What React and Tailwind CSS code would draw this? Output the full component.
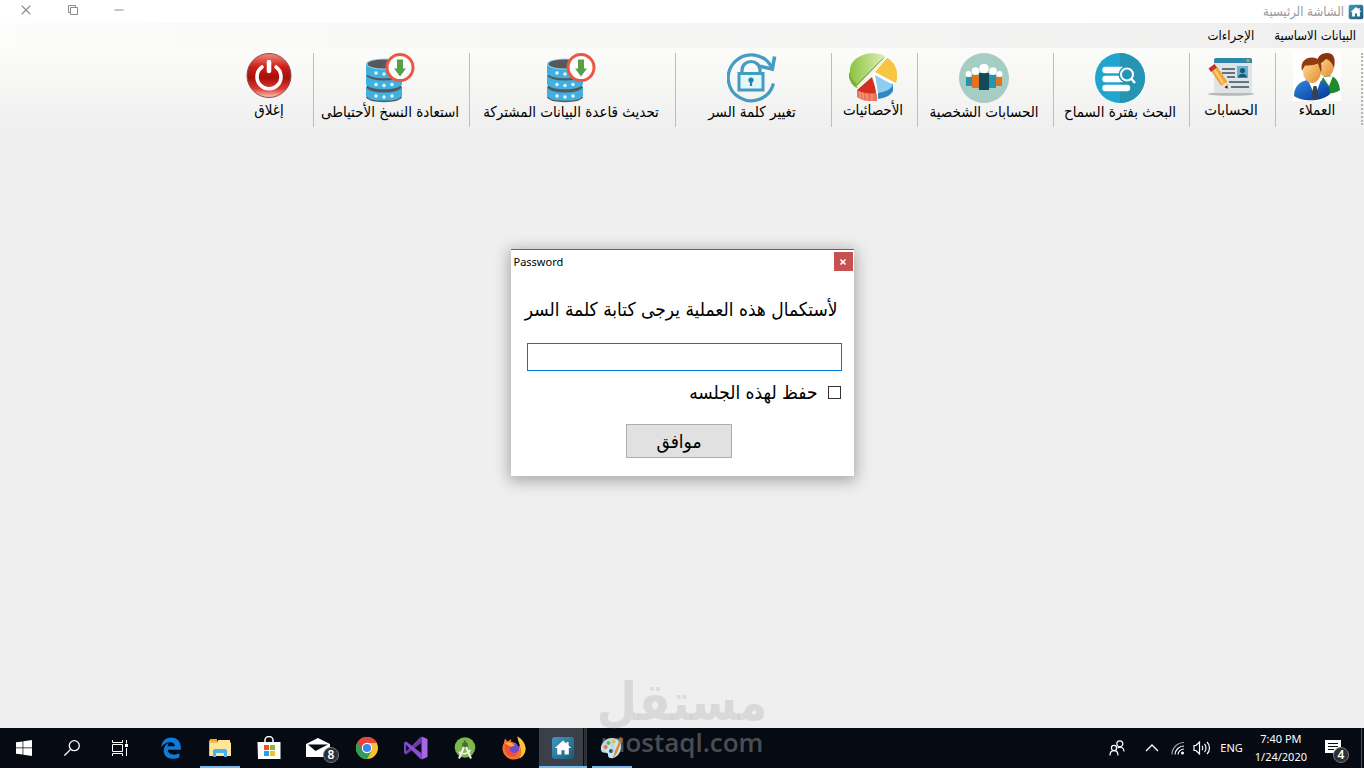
import { Minus, X } from 'lucide-react';

function HomeIcon({ className }) {
  return (
    <svg viewBox="0 0 24 24" className={className} aria-hidden="true">
      <defs>
        <linearGradient id="home-bg" x1="0" y1="0" x2="1" y2="1">
          <stop offset="0" stopColor="#3f9bc4" />
          <stop offset="1" stopColor="#1d5878" />
        </linearGradient>
      </defs>
      <rect x="1" y="1" width="22" height="22" rx="3" fill="url(#home-bg)" />
      <path d="M12 4.5 3.8 12h2.4v6.6h4.2v-4.4h3.2v4.4h4.2V12h2.4l-2.6-2.4V6h-2v1.8z" fill="#fff" />
    </svg>
  );
}

function ClientsIcon() {
  return (
    <svg viewBox="0 0 48 48" className="size-12" aria-hidden="true">
      <defs>
        <linearGradient id="cl-face" x1="0" y1="0" x2="1" y2="1">
          <stop offset="0" stopColor="#ffe0a0" />
          <stop offset="1" stopColor="#e58a2c" />
        </linearGradient>
        <linearGradient id="cl-suit" x1="0" y1="0" x2="1" y2="1">
          <stop offset="0" stopColor="#2f8be6" />
          <stop offset="1" stopColor="#06348f" />
        </linearGradient>
      </defs>
      <rect width="48" height="48" fill="#fff" />
      <path d="M26 37c2-10 4-15 9-15 7 1 11 6 12 15-5 4-14 5-21 1z" fill="#1e8a2c" />
      <path d="m30 24 6 9 4-10z" fill="#fff" />
      <ellipse cx="33" cy="13" rx="8" ry="10.5" fill="url(#cl-face)" />
      <path d="M24 12C23 4 28 0 34 0c7 0 9 6 7 15-2-6-5-8-8-9-3 3-5 4-9 6z" fill="#8a3410" />
      <path d="M1 43c0-9 5-14 13-16h12c8 2 11 7 11 14-8 8-28 8-36 2z" fill="url(#cl-suit)" />
      <path d="m15 27 7 16 6-16z" fill="#fff" />
      <path d="m20.500 33 3 0 2 10-3.500 4-3.500-4z" fill="#39424f" />
      <ellipse cx="19" cy="18" rx="9" ry="12" fill="url(#cl-face)" />
      <path d="M9 18C7 9 12 4.500 19 4.500c7 0 11 5 9 15l-3-9c-5 2-10 2-13 2z" fill="#923a12" />
    </svg>
  );
}

function AccountsIcon() {
  return (
    <svg viewBox="0 0 48 48" className="size-12" aria-hidden="true">
      <ellipse cx="24" cy="41" rx="23" ry="1.800" fill="#b9b9b9" />
      <rect x="7" y="5" width="38" height="35" rx="2" fill="#dfe4e6" />
      <path d="M7 10V7a2 2 0 0 1 2-2h34a2 2 0 0 1 2 2v3z" fill="#2f86ac" />
      <circle cx="41" cy="7.500" r="1.600" fill="#f0982c" />
      <path d="M15 16h13M15 20h13M20 24h8M22 29h20M24 34h18" stroke="#3d4f5c" strokeWidth="1.300" />
      <rect x="30" y="13" width="11" height="12" fill="#67b3d6" />
      <circle cx="35.500" cy="17.500" r="2.600" fill="#1d5878" />
      <path d="M31 24.500c.5-5 8.500-5 9 0z" fill="#1d5878" />
      <path d="m4 18 6-4.500L20 28l.5 7.500-7-3.500z" fill="#f3a73a" />
      <path d="m7 16 9 14" stroke="#ffd489" strokeWidth="2" />
      <path d="m1.500 15.500 6-4.500 2.500 3.500-6 4.500z" fill="#c4302b" />
      <path d="m14.500 32.500 5-3.500 1 6.500z" fill="#f6dfb7" />
      <path d="m17.500 34.200 2.700-2 .6 3.600z" fill="#222" />
    </svg>
  );
}

function SearchPeriodIcon() {
  return (
    <svg viewBox="0 0 50 50" className="size-[50px]" aria-hidden="true">
      <circle cx="25" cy="25" r="25" fill="#20a5ce" />
      <path d="M25 0a25 25 0 0 1 0 50z" fill="#2694b3" />
      <path d="M10.500 17H27M10.500 26H27M10.500 35H32" stroke="#fff" strokeWidth="6.400" strokeLinecap="round" />
      <circle cx="32" cy="21.500" r="8.500" fill="#2694b3" />
      <circle cx="32" cy="21.500" r="6" fill="none" stroke="#fff" strokeWidth="2" />
      <path d="m36 25.500 4 4.500" stroke="#fff" strokeWidth="2.400" />
    </svg>
  );
}

function PersonalIcon() {
  return (
    <svg viewBox="0 0 50 50" className="size-[50px]" aria-hidden="true">
      <circle cx="25" cy="25" r="25" fill="#a5cdc4" />
      <path d="M7 24h6v9H7z" fill="#2694ad" />
      <path d="M37 24h6v9h-6z" fill="#e8701c" />
      <path d="M13 22h7v13h-7z" fill="#e8701c" />
      <path d="M30 22h7v13h-7z" fill="#2694ad" />
      <path d="M20 20h10v17H20z" fill="#0f4b5a" />
      <g fill="#fff">
        <circle cx="9.500" cy="21" r="3" />
        <circle cx="40.500" cy="21" r="3" />
        <circle cx="16.500" cy="18" r="3.800" />
        <circle cx="34" cy="18" r="3.800" />
        <circle cx="25" cy="15.500" r="4.800" />
      </g>
    </svg>
  );
}

function StatsIcon() {
  return (
    <svg viewBox="0 0 48 48" className="size-12" aria-hidden="true">
      <defs>
        <linearGradient id="st-green" x1="0" y1="0" x2="1" y2="0">
          <stop offset="0" stopColor="#8cc342" />
          <stop offset="1" stopColor="#dfeeb8" />
        </linearGradient>
      </defs>
      <path d="M0 20v4c1 5 4 9 8 11l28-29v-2z" fill="#79ad35" />
      <path d="M8 31C-2 24-1 11 8 5c8-6 20-6 28-2z" fill="url(#st-green)" />
      <path d="M38 5c9 5 12 14 9 25L26 19z" fill="#f7c540" />
      <path d="M29 30v16c7-1 12-3 15-8v-7z" fill="#2d87c8" />
      <path d="M26 22l3 18c7-1 12-3 15-8z" fill="#8fcdf0" />
      <path d="M8 37v7c5 4 13 5 20 4v-8z" fill="#e9745a" />
      <path d="M11 38v8M14 39v8M18 40v8M23 40v8" stroke="#f6a28e" strokeWidth="1" />
      <path d="M23 24 8 37c5 3 13 4 20 3z" fill="#d2301f" />
      <path d="M8 34 37 4M25 20l21 11M25 22l3 19" stroke="#fff" strokeWidth="1.400" />
    </svg>
  );
}

function LockIcon() {
  return (
    <svg viewBox="0 0 50 50" className="size-[50px]" fill="none" stroke="#449cc2" aria-hidden="true">
      <path d="M46.500 30.500A23 23 0 1 1 44.500 14" strokeWidth="3.200" />
      <path d="M33 13.300 45.300 16 47.600 3.500" strokeWidth="3.600" />
      <path d="M15 20v-3a9 8.500 0 0 1 18 0v3" strokeWidth="3.200" />
      <rect x="12" y="20.500" width="24" height="16.500" fill="#e0f8fc" strokeWidth="3" />
      <circle cx="24" cy="27" r="2.600" fill="#2f7fa3" stroke="none" />
      <path d="M24 27v6" stroke="#2f7fa3" strokeWidth="2.200" />
    </svg>
  );
}

function DatabaseIcon() {
  return (
    <svg viewBox="0 0 50 50" className="size-[50px]" aria-hidden="true">
      <path d="M1 34v9c2 7 34 7 36 0v-9z" fill="#41b0e0" />
      <ellipse cx="19" cy="34" rx="17.500" ry="5.500" fill="#56595b" />
      <path d="M1 22v9c2 7 34 7 36 0v-9z" fill="#41b0e0" />
      <ellipse cx="19" cy="22" rx="17.500" ry="5.500" fill="#56595b" />
      <path d="M1 11v9c2 7 34 7 36 0v-9z" fill="#41b0e0" />
      <ellipse cx="19" cy="11" rx="18" ry="5.500" fill="#8fd2ee" />
      <ellipse cx="19" cy="11" rx="16.500" ry="4.500" fill="#56595b" />
      <path d="M1.500 44c3 6 32 6 35 0" fill="none" stroke="#56595b" strokeWidth="1.500" />
      <g fill="#e9faff">
        <circle cx="11" cy="20" r="1.700" />
        <circle cx="19" cy="21" r="1.700" />
        <circle cx="11" cy="31.500" r="1.700" />
        <circle cx="19" cy="32.500" r="1.700" />
        <circle cx="27" cy="31.500" r="1.700" />
        <circle cx="11" cy="43" r="1.700" />
        <circle cx="19" cy="44" r="1.700" />
        <circle cx="27" cy="43" r="1.700" />
      </g>
      <circle cx="35" cy="14.500" r="13" fill="#fff" stroke="#ec5744" strokeWidth="3" />
      <path d="M32 6.500h6v9h3l-6 8-6-8h3z" fill="#56a146" />
    </svg>
  );
}

function PowerIcon() {
  return (
    <svg viewBox="0 0 48 48" className="size-12" aria-hidden="true">
      <defs>
        <linearGradient id="pw-red" x1="0" y1="0" x2="0" y2="1">
          <stop offset="0" stopColor="#ef8b80" />
          <stop offset=".3" stopColor="#cf1f18" />
          <stop offset=".55" stopColor="#a80f0b" />
          <stop offset=".8" stopColor="#dc3a30" />
          <stop offset="1" stopColor="#ffc7be" />
        </linearGradient>
      </defs>
      <circle cx="24" cy="22.500" r="22" fill="url(#pw-red)" stroke="#8d4b48" strokeWidth="1" />
      <path d="M17 14a12 12 0 1 0 14 0" fill="none" stroke="#fff" strokeWidth="3.600" strokeLinecap="round" />
      <path d="M24 9v9" stroke="#fff" strokeWidth="4.600" strokeLinecap="round" />
    </svg>
  );
}

const TOOLS = [
  { label: 'العملاء', icon: <ClientsIcon />, width: 'w-[86px]' },
  { label: 'الحسابات', icon: <AccountsIcon />, width: 'w-[86px]' },
  { label: 'البحث بفترة السماح', icon: <SearchPeriodIcon />, width: 'w-[136px]' },
  { label: 'الحسابات الشخصية', icon: <PersonalIcon />, width: 'w-[136px]' },
  { label: 'الأحصائيات', icon: <StatsIcon />, width: 'w-[86px]' },
  { label: 'تغيير كلمة السر', icon: <LockIcon />, width: 'w-[156px]' },
  { label: 'تحديث قاعدة البيانات المشتركة', icon: <DatabaseIcon />, width: 'w-[206px]' },
  { label: 'استعادة النسخ الأحتياطى', icon: <DatabaseIcon />, width: 'w-[156px]' },
  { label: 'إغلاق', icon: <PowerIcon />, width: 'w-[88px]' },
];

function TitleBar() {
  return (
    <header className="flex h-[23px] items-center justify-between bg-white pl-[18px]">
      <div className="flex items-center gap-1 text-[13px] leading-4 text-[#999]">
        <HomeIcon className="size-4" />
        <span>الشاشة الرئيسية</span>
      </div>
      <div className="flex items-center gap-8 pb-1 text-[#8c8c8c]">
        <button type="button" aria-label="تصغير">
          <Minus className="size-[14px]" strokeWidth={1.7} />
        </button>
        <button type="button" aria-label="استعادة">
          <svg viewBox="0 0 14 14" className="size-[14px]" fill="none" stroke="currentColor" aria-hidden="true">
            <path d="M4.500 4.500h7v7h-7zM4.500 9.500h-2v-7h7v2" />
          </svg>
        </button>
        <button type="button" aria-label="إغلاق النافذة">
          <X className="size-4" strokeWidth={1.6} />
        </button>
      </div>
    </header>
  );
}

function MenuBar() {
  return (
    <nav className="flex h-[25px] items-center gap-5 bg-linear-to-l from-[#efefef] to-[#fcfcfa] px-2 text-[13px] leading-4 text-black">
      <button type="button">البيانات الاساسية</button>
      <button type="button">الإجراءات</button>
    </nav>
  );
}

function Toolbar() {
  return (
    <div className="flex h-[82px] bg-linear-to-b from-[#fcfcfa] to-[#efefef] pt-[5px]">
      <div className="mr-px h-[72px] border-r-2 border-dotted border-[#b5b5b5]" />
      {TOOLS.map((t) => (
        <button
          key={t.label}
          type="button"
          className={`${t.width} flex h-[74px] shrink-0 flex-col items-center gap-px border-l border-[#bdbdbd] pr-[3px] text-[15px] leading-4 text-black last:border-l-0 last:pr-0`}
        >
          {t.icon}
          <span className="whitespace-nowrap">{t.label}</span>
        </button>
      ))}
    </div>
  );
}

function PasswordDialog() {
  return (
    <form
      role="dialog"
      aria-labelledby="dlg-title"
      className="w-[343px] border-t border-[#666] bg-white pb-[18px] text-black shadow-[0_3px_14px_2px_rgba(0,0,0,0.3)]"
      onSubmit={(e) => e.preventDefault()}
    >
      <div dir="ltr" className="flex items-center justify-between pt-[2px] pr-px pl-[3px]">
        <h1 id="dlg-title" className="font-['Noto_Sans'] text-[11px] leading-4">Password</h1>
        <button
          type="button"
          aria-label="Close"
          className="flex size-[19px] items-center justify-center bg-[#c75050] text-white"
        >
          <X className="size-2" strokeWidth={5} />
        </button>
      </div>
      <div className="pt-[26px] pr-3 pl-4">
        <label htmlFor="pwd" className="block pr-1 text-[19px] leading-6 whitespace-nowrap">
          لأستكمال هذه العملية يرجى كتابة كلمة السر
        </label>
        <input
          id="pwd"
          type="password"
          className="mt-[22px] block h-7 w-full border border-[#0078d7] bg-white px-2 outline-none"
        />
        <div className="mt-[9px] flex items-center gap-[10px]">
          <input
            id="keep"
            type="checkbox"
            className="mr-px size-[13px] appearance-none border border-[#333] bg-white checked:bg-[#333]"
          />
          <label htmlFor="keep" className="text-[19px] leading-6">حفظ لهذه الجلسه</label>
        </div>
        <div className="mt-5 flex justify-center pr-[10px]">
          <button
            type="submit"
            className="h-[34px] w-[106px] border border-[#adadad] bg-[#e1e1e1] text-[19px] leading-6"
          >
            موافق
          </button>
        </div>
      </div>
    </form>
  );
}

const START_APPS = [
  {
    name: 'Start',
    icon: (
      <svg viewBox="0 0 16 16" className="size-4" fill="#fff">
        <path d="m0 2.300 6.600-.9v6.200H0zM7.300 1.300 16 0v7.600H7.300zM0 8.300h6.600v6.300L0 13.700zM7.300 8.300H16V16l-8.700-1.300z" />
      </svg>
    ),
  },
  {
    name: 'Search',
    icon: (
      <svg viewBox="0 0 16 16" className="size-4" fill="none" stroke="#fff" strokeWidth="1.300">
        <circle cx="10.300" cy="5.700" r="5" />
        <path d="M6.600 9.400.4 15.600" />
      </svg>
    ),
  },
  {
    name: 'Task View',
    icon: (
      <svg viewBox="0 0 16 16" className="size-4" fill="none" stroke="#fff">
        <path d="M.5 0v2.500h10V0M.5 16v-2.500h10V16M.5 4.500h10v7H.5zM14.500 0v3.500M14.500 8v8" />
        <path d="M13 4h3v3h-3z" fill="#fff" stroke="none" />
      </svg>
    ),
  },
];

const PINNED_APPS = [
  {
    name: 'Edge',
    icon: (
      <svg viewBox="0 0 22 22" className="size-[22px]">
        <path
          d="M1 10.200C1.700 4.500 5.500.5 11.200.5c6.300 0 9.600 4.600 9.600 10v2.300H7.900c.1 5.600 7.600 5.800 11.500 3.300v4.200c-6.600 3.400-15.700 1.300-15.700-6.500 0-4 2.300-6.600 5.300-8-1 1.200-1.300 2.400-1.400 3.500h7.300c.2-5.400-9.300-5.500-13.900.9z"
          fill="#0b7bdc"
        />
      </svg>
    ),
  },
  {
    name: 'File Explorer',
    line: true,
    icon: (
      <svg viewBox="0 0 22 22" className="size-[22px]">
        <path d="M0 3.500h8l1.500 2H22V19H0z" fill="#efbe52" />
        <path d="M1 2h7v2H1z" fill="#f6a621" />
        <path d="M9 3h12v4H9zM1 6h21v13H1z" fill="#ffe59a" />
        <path d="M4 20v-6a2 2 0 0 1 2-2h10a2 2 0 0 1 2 2v6h-3v-4H7v4z" fill="#48b3e6" />
      </svg>
    ),
  },
  {
    name: 'Store',
    icon: (
      <svg viewBox="0 0 24 24" className="size-6">
        <path d="M8 7V4a4 3.500 0 0 1 8 0v3" fill="none" stroke="#fff" strokeWidth="1.500" />
        <path d="M.5 6h23v17H1z" fill="#fff" />
        <path d="M7 9h5v5H7z" fill="#f0502a" />
        <path d="M13 9h5v5h-5z" fill="#84bb3a" />
        <path d="M7 15h5v5H7z" fill="#22a3e2" />
        <path d="M13 15h5v5h-5z" fill="#fbbd2a" />
      </svg>
    ),
  },
  {
    name: 'Mail',
    badge: '8',
    icon: (
      <svg viewBox="0 0 24 20" className="h-5 w-6">
        <path d="M0 6 12 0l12 6v13H0z" fill="#fff" />
        <path d="M2 6.500h20L9.500 13z" fill="#070b13" />
      </svg>
    ),
  },
  {
    name: 'Chrome',
    icon: (
      <svg viewBox="0 0 22 22" className="size-[22px]">
        <circle cx="11" cy="11" r="11" fill="#fbc02f" />
        <path d="M11 11 1.500 5.500A11 11 0 0 0 11 22l5-8.500z" fill="#26a05a" />
        <path d="M11 6h9.800A11 11 0 0 0 1.500 5.500L6.700 13.500 11 11z" fill="#e5463a" />
        <circle cx="11" cy="11" r="5.200" fill="#fff" />
        <circle cx="11" cy="11" r="4.100" fill="#4285e8" />
      </svg>
    ),
  },
  {
    name: 'Visual Studio',
    icon: (
      <svg viewBox="0 0 24 24" className="size-6">
        <path d="m17.500.5 6 2.500v18l-6 2.500z" fill="#a566e8" />
        <path d="M17.500.5v6.200L2.200 18.500 0 17.200 16 1.500z" fill="#6c3bb2" />
        <path d="M0 6.800 2.200 5.500l15.300 11.800v6.200L16 22.500z" fill="#8a50d0" />
        <path d="M0 6.800h2.200v10.400H0z" fill="#7a44c2" />
      </svg>
    ),
  },
  {
    name: 'Android Studio',
    icon: (
      <svg viewBox="0 0 22 22" className="size-[22px]">
        <circle cx="11" cy="10.500" r="10.300" fill="#7cb84a" />
        <circle cx="11" cy="8" r="3" fill="#4d6b3b" />
        <path d="M11 3.500v3" stroke="#4d6b3b" strokeWidth="2" />
        <path d="M10 10 5 21.500M12 10l5 11.500" stroke="#f2f2f2" strokeWidth="2" />
        <path d="M5 15c4 3 9 2 11.500-2" fill="none" stroke="#f2f2f2" strokeWidth="1.600" />
      </svg>
    ),
  },
  {
    name: 'Firefox',
    icon: (
      <svg viewBox="0 0 24 24" className="size-6">
        <path d="M2 7c0-2 .5-3.500 1.500-4.500C4 4 5 5 6 5.500 7 4 8.500 3.500 9.500 3.500L9 6c4 0 7 2 7 6l3-4C18.500 4.500 16 3 15.500.5c3 1.500 7.500 6 8 11.500.3 7-5 11.500-11.500 11.500S.5 18.500.5 12.500C.5 10 1 8.500 2 7z" fill="#f4722c" />
        <path d="M15.500.5c3 1.500 7.500 6 8 11.500.2 5-2.500 8.500-6 10.300 2-3 2.500-8 .5-12C17 6 15.500 4 15.500.5z" fill="#fbc43a" />
        <circle cx="12" cy="12.500" r="5" fill="#6b4bd0" />
        <path d="M3 8c3-1 6 0 8 2-2 .5-3.500 1.500-3 4 1 3 5 3.500 8 2-1 4-5 6-9 4-4-3-5-7-4-12z" fill="#ef5038" />
        <path d="M3 7.500C5 6 8 6 9.500 7l3.500 2.500-4 1.300z" fill="#fbb02e" />
      </svg>
    ),
  },
  { name: 'Home', active: true, icon: <HomeIcon className="size-6" /> },
  {
    name: 'Paint',
    line: true,
    icon: (
      <svg viewBox="0 0 24 24" className="size-6">
        <path d="M1 14C0 7 6 2 12 2c6 0 10 4 9 10-1 7-6 11-11 10-3-1-1-4-3-5s-5 1-6-3z" fill="#c5e6f5" />
        <circle cx="5.500" cy="11" r="2" fill="#e06a3c" />
        <circle cx="8.500" cy="7" r="2" fill="#63b13e" />
        <circle cx="13.500" cy="5.500" r="2" fill="#f3c12f" />
        <circle cx="11" cy="15" r="2" fill="#1f4e6b" />
        <path d="m20 3-5 12-2.500 8 4.500-6 5-13z" fill="#e58b2c" />
        <path d="M18.500 5 20 .5l3.500 2L21.500 7z" fill="#8a4b24" />
      </svg>
    ),
  },
];

function CountBadge({ children }) {
  return (
    <span className="flex size-4 items-center justify-center rounded-full border border-[#777] bg-[#2b2f36] text-[12px] leading-3 font-semibold text-white">
      {children}
    </span>
  );
}

function TaskButton({ app }) {
  return (
    <button
      type="button"
      aria-label={app.name}
      className="relative flex h-10 w-12 items-center justify-center"
    >
      {app.active && <span className="absolute inset-y-0 left-0 w-11 bg-[#3b3f47]" />}
      {app.active && <span className="absolute inset-y-0 right-0 w-[3px] bg-[#2d3138]" />}
      <span className="relative">{app.icon}</span>
      {app.badge && (
        <span className="absolute top-[19px] left-[29px]">
          <CountBadge>{app.badge}</CountBadge>
        </span>
      )}
      {app.line && <span className="absolute inset-x-1 bottom-0 h-[2px] bg-[#76b9ed]" />}
      {app.active && <span className="absolute inset-x-0 bottom-0 h-[2px] bg-[#76b9ed]" />}
    </button>
  );
}

function Taskbar() {
  return (
    <footer dir="ltr" className="flex h-10 items-center justify-between bg-[#060a12] font-['Noto_Sans'] text-white">
      <div className="flex gap-[3px]">
        <div className="flex">
          {START_APPS.map((a) => <TaskButton key={a.name} app={a} />)}
        </div>
        <div className="flex gap-px">
          {PINNED_APPS.map((a) => <TaskButton key={a.name} app={a} />)}
        </div>
      </div>
      <div className="flex h-10 items-center">
        <button type="button" aria-label="People" className="mr-5">
          <svg viewBox="0 0 16 16" className="size-4" fill="none" stroke="#fff" strokeWidth="1.200">
            <circle cx="10.800" cy="3.800" r="3" />
            <circle cx="5" cy="8" r="2.600" />
            <path d="M1 15.500c0-6.500 8-6.500 8 0M8.500 8c3-2 6.500-.5 6.500 3.500" />
          </svg>
        </button>
        <button type="button" aria-label="Show hidden icons" className="mr-3">
          <svg viewBox="0 0 14 14" className="size-[14px]" fill="none" stroke="#fff" strokeWidth="1.400">
            <path d="m1 10 6-6 6 6" />
          </svg>
        </button>
        <button type="button" aria-label="Network" className="mr-2">
          <svg viewBox="0 0 14 14" className="size-[14px]" fill="none" stroke="#fff" strokeWidth="1.200">
            <path d="M1 13.500A12 12 0 0 1 13 1.500" stroke="#9a9da2" />
            <path d="M4 13.500a9 9 0 0 1 9-8.500M7 13.500a6 6 0 0 1 6-5.500" />
            <circle cx="11.500" cy="12" r="1.500" fill="#fff" stroke="none" />
          </svg>
        </button>
        <button type="button" aria-label="Volume" className="mr-[9px]">
          <svg viewBox="0 0 18 14" className="h-[14px] w-[18px]" fill="none" stroke="#fff" strokeWidth="1.200">
            <path d="M1 4.500h2l3.500-3.500v12L3 9.500H1z" />
            <path d="M9 5c1 1 1 3 0 4M11.500 3c2 2 2 6 0 8M14 1c3.300 3 3.300 9 0 12" />
          </svg>
        </button>
        <span className="mr-3 text-[11px] leading-4">ENG</span>
        <div className="mr-[18px] text-center text-[11px] leading-[18px]">
          <div>7:40 PM</div>
          <div>1/24/2020</div>
        </div>
        <button type="button" aria-label="Notifications" className="relative mr-5 h-10">
          <svg viewBox="0 0 16 16" className="size-4" aria-hidden="true">
            <path d="M0 0h16v13h-5v3l-3.500-3H0z" fill="#fff" />
            <path d="M3 3.500h10M3 6.500h10M3 9.500h6" stroke="#060a12" />
          </svg>
          <span className="absolute top-[19px] left-2">
            <CountBadge>4</CountBadge>
          </span>
        </button>
        <div className="mr-[2px] h-10 w-px bg-[#50545a]" />
      </div>
    </footer>
  );
}

export default function App() {
  return (
    <div
      dir="rtl"
      className="relative flex h-screen flex-col overflow-hidden bg-white pb-1 font-['DejaVu_Sans_Condensed','DejaVu_Sans',sans-serif]"
    >
      <div className="relative flex flex-1 flex-col bg-[#efefef]">
        <TitleBar />
        <MenuBar />
        <Toolbar />
        <div className="pointer-events-none absolute inset-0 flex items-center justify-center pb-[3px]">
          <div className="pointer-events-auto">
            <PasswordDialog />
          </div>
        </div>
      </div>
      <Taskbar />

      {/* watermark */}
      <div className="pointer-events-none absolute inset-x-0 bottom-4 flex flex-col items-center text-center text-[rgba(186,186,186,0.4)]">
        <span className="text-[52px] leading-[52px] font-bold">مستقل</span>
        <span dir="ltr" className="font-['Open_Sans'] text-[26px] leading-7 font-semibold">mostaql.com</span>
      </div>
    </div>
  );
}
